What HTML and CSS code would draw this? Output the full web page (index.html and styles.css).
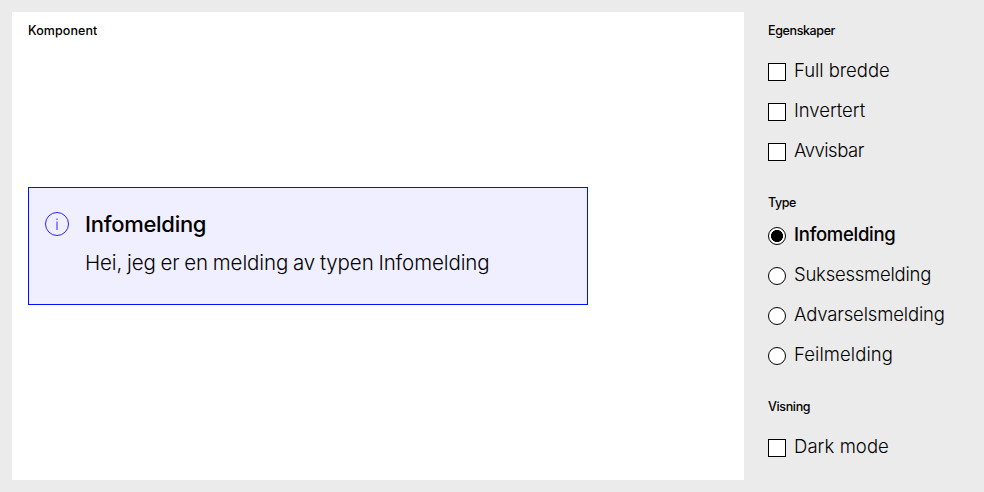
FILE: index.html
```
<!DOCTYPE html>
<html lang="no">
<head>
<meta charset="utf-8">
<title>Infomelding</title>
<link rel="stylesheet" href="styles.css">
</head>
<body>
<main class="example">
  <section class="preview">
    <h2 class="label label-component">Komponent</h2>
    <div class="stage">
      <div class="message">
        <svg class="message-icon" viewBox="0 0 24 24" width="24" height="24" fill="none" stroke="currentColor"><circle cx="12" cy="12" r="11.5"/><path d="M12 9.5v8.5M12 6.5v1.5"/></svg>
        <div class="message-content">
          <h3 class="message-title">Infomelding</h3>
          <p class="message-text">Hei, jeg er en melding av typen Infomelding</p>
        </div>
      </div>
    </div>
  </section>
  <aside class="controls">
    <section class="group">
      <h2 class="label label-properties">Egenskaper</h2>
      <div class="option"><i class="box"></i><span class="text full">Full bredde</span></div>
      <div class="option"><i class="box"></i><span class="text inverted">Invertert</span></div>
      <div class="option"><i class="box"></i><span class="text dismissable">Avvisbar</span></div>
    </section>
    <section class="group group-type">
      <h2 class="label label-type">Type</h2>
      <div class="option"><i class="radio checked"></i><span class="text selected">Infomelding</span></div>
      <div class="option"><i class="radio"></i><span class="text success">Suksessmelding</span></div>
      <div class="option"><i class="radio"></i><span class="text warning">Advarselsmelding</span></div>
      <div class="option"><i class="radio"></i><span class="text error">Feilmelding</span></div>
    </section>
    <section class="group">
      <h2 class="label label-view">Visning</h2>
      <div class="option"><i class="box"></i><span class="text dark">Dark mode</span></div>
    </section>
  </aside>
</main>
</body>
</html>
```
FILE: styles.css
```
* { box-sizing: border-box; }
body { margin: 0; background: #ebebeb; color: #000; font-family: Inter, "Liberation Sans", sans-serif; }
.example { display: grid; grid-template-columns: 732px 1fr; grid-template-rows: 468px; gap: 24px; height: 492px; padding: 12px; }
.preview { display: flex; flex-direction: column; background: #fff; padding: 9px 16px 8px; }
.label { margin: 0; font-size: 12.5px; line-height: 20px; font-weight: 450; white-space: nowrap; }
.label-component { letter-spacing: 0.08px; }
.label-properties { letter-spacing: -0.38px; }
.label-type { letter-spacing: -0.4px; }
.label-view { letter-spacing: -0.35px; }
.stage { flex: 1; display: flex; align-items: center; padding-bottom: 21px; }
.message { display: flex; gap: 16px; width: 560px; height: 118px; padding: 20px 16px; border: 1px solid #0010ff; background: #f0efff; }
.message-icon { display: block; flex: none; margin-top: 4px; color: #2424ff; }
.message-title { margin: 0; font-size: 22px; line-height: 32px; font-weight: 500; letter-spacing: -0.28px; white-space: nowrap; }
.message-text { margin: 8px 0 0; font-size: 20.5px; line-height: 30px; font-weight: 300; letter-spacing: -0.1px; word-spacing: -0.9px; white-space: nowrap; }
.controls { padding-top: 9px; }
.group { padding-bottom: 20px; }
.group .label { margin-bottom: 11px; }
.group-type .label { margin-bottom: 3px; }
.group + .group { margin-top: 1px; }
.option { display: flex; align-items: center; gap: 8px; height: 40px; }
.box, .radio { flex: none; width: 18px; height: 18px; border: 1px solid #000; background: #fff; }
.radio { border-radius: 50%; }
.checked { background: radial-gradient(circle, #000 0 5.7px, #fff 6.3px); }
.text { position: relative; top: -2px; font-size: 18.5px; line-height: 28px; font-weight: 300; white-space: nowrap; }
.full { letter-spacing: -0.05px; }
.inverted { letter-spacing: -0.05px; }
.dismissable { letter-spacing: -0.5px; }
.success { letter-spacing: -0.23px; }
.warning { letter-spacing: -0.16px; }
.error { letter-spacing: 0.07px; }
.dark { letter-spacing: 0.07px; }
.selected { font-weight: 500; letter-spacing: -0.27px; }
```
